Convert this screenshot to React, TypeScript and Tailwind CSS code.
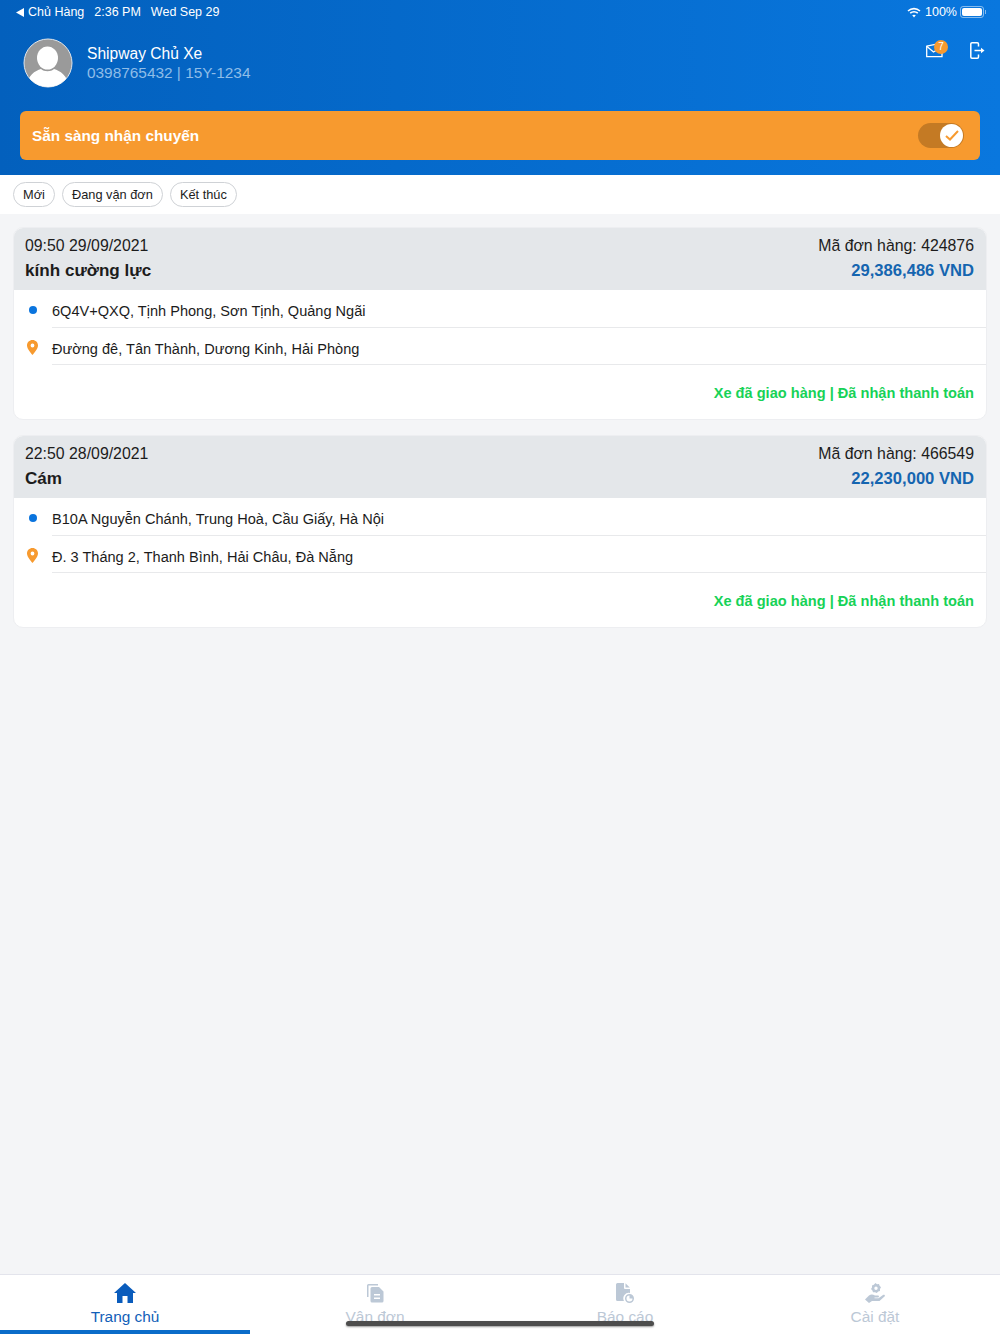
import React from "react";

function Avatar() {
  return (
    <svg width="50" height="50" viewBox="0 0 50 50" className="shrink-0">
      <defs>
        <clipPath id="av"><circle cx="25" cy="25" r="24" /></clipPath>
      </defs>
      <circle cx="25" cy="25" r="24" fill="#9a9a9a" stroke="#dfe5ec" strokeWidth="1" />
      <g clipPath="url(#av)">
        <ellipse cx="24.5" cy="20" rx="10.5" ry="11.5" fill="#fff" />
        <path d="M4 50 C4 37 12 33 18 31 C21 34 28 34 31 31 C37 33 45 37 46 50 Z" fill="#fff" />
      </g>
    </svg>
  );
}

function Wifi() {
  return (
    <svg width="14" height="11" viewBox="0 0 14 11" fill="none" stroke="#fff" strokeWidth="1.6">
      <path d="M1 4 C4.5 0.8 9.5 0.8 13 4" />
      <path d="M3.2 6.2 C5.3 4.4 8.7 4.4 10.8 6.2" />
      <path d="M7 10.5 L5.2 8.3 C6.2 7.5 7.8 7.5 8.8 8.3 Z" fill="#fff" stroke="none" />
    </svg>
  );
}

function Battery() {
  return (
    <div className="flex items-center">
      <div className="w-[24px] h-[12px] rounded-[3px] border border-white/50 p-[1px]">
        <div className="w-full h-full bg-white rounded-[2px]" />
      </div>
      <div className="w-[1px] h-[4px] bg-white/50 ml-[1px]" />
    </div>
  );
}

function Mail() {
  return (
    <div className="relative w-[22px] h-[20px]">
      <svg width="17" height="15" viewBox="0 0 17 15" fill="none" stroke="#fff" strokeWidth="1.3" className="absolute left-0 top-[3px]">
        <path d="M0.7 3.2 L13 0.7 L16 1.5 V13.7 H0.7 Z" />
        <path d="M0.7 3.2 L7.5 9 L15 4.5" />
      </svg>
      <div className="absolute left-[8px] top-0 w-[14px] h-[14px] rounded-full bg-[#f79a2f] text-white text-[10px] leading-[14px] text-center">7</div>
    </div>
  );
}

function Logout() {
  return (
    <svg width="15" height="17" viewBox="0 0 15 17" fill="none" stroke="#fff" strokeWidth="1.5">
      <path d="M8.5 4.5 V2 A1.2 1.2 0 0 0 7.3 0.8 H2 A1.2 1.2 0 0 0 0.8 2 V15 A1.2 1.2 0 0 0 2 16.2 H7.3 A1.2 1.2 0 0 0 8.5 15 V12.5" />
      <path d="M4.5 8.5 H11" />
      <path d="M11 5.8 L14.5 8.5 L11 11.2 Z" fill="#fff" stroke="none" />
    </svg>
  );
}

function Pin() {
  return (
    <svg width="11" height="15" viewBox="0 0 11 15">
      <path fillRule="evenodd" d="M5.5 0 C8.6 0 11 2.4 11 5.4 C11 9 7 12.8 5.5 15 C4 12.8 0 9 0 5.4 C0 2.4 2.4 0 5.5 0 Z M5.5 3.6 A1.9 1.9 0 1 0 5.5 7.4 A1.9 1.9 0 1 0 5.5 3.6 Z" fill="#f79a2f" />
    </svg>
  );
}

type Order = { time: string; code: string; name: string; price: string; from: string; to: string };

function Card({ o }: { o: Order }) {
  return (
    <div className="bg-white rounded-[10px] border border-[#edeef1] overflow-hidden h-[193px]">
      <div className="bg-[#e4e7ea] h-[62px] px-[11px] pt-[5px] flex justify-between text-[15.85px] leading-[25px] text-[#1c1c1c]">
        <div>
          <div>{o.time}</div>
          <div className="font-bold text-[17.1px]">{o.name}</div>
        </div>
        <div className="text-right pr-[1px]">
          <div>{o.code}</div>
          <div className="font-bold text-[16.6px] text-[#1565b0]">{o.price}</div>
        </div>
      </div>
      <div className="flex">
        <div className="w-[38px] flex justify-center pt-[16px] pr-[1px]">
          <div className="w-[8px] h-[8px] rounded-full bg-[#0a74de]" />
        </div>
        <div className="flex-1 h-[37.5px] border-b border-[#e8e9eb] pt-[8px] text-[14.55px] leading-[26px] text-[#1c1c1c]">{o.from}</div>
      </div>
      <div className="flex">
        <div className="w-[38px] flex justify-center pt-[12px] pr-[1px]">
          <Pin />
        </div>
        <div className="flex-1 h-[37.5px] border-b border-[#e8e9eb] pt-[8px] text-[14.55px] leading-[26px] text-[#1c1c1c]">{o.to}</div>
      </div>
      <div className="pt-[15px] pr-[12px] text-right text-[14.6px] leading-[26px] font-bold text-[#17d257]">
        Xe đã giao hàng | Đã nhận thanh toán
      </div>
    </div>
  );
}

function Tab({ label, active, children }: { label: string; active?: boolean; children: React.ReactNode }) {
  return (
    <div className={`flex-1 flex flex-col items-center pt-[7px] border-b-[4px] ${active ? "border-[#0a6cc9] text-[#1260b8]" : "border-transparent text-[#bcc8d6]"}`}>
      <div className="h-[22px] flex items-center justify-center">{children}</div>
      <div className="text-[15.4px] leading-[22px] mt-[2px]">{label}</div>
    </div>
  );
}

export default function App() {
  const orders: Order[] = [
    {
      time: "09:50 29/09/2021",
      code: "Mã đơn hàng: 424876",
      name: "kính cường lực",
      price: "29,386,486 VND",
      from: "6Q4V+QXQ, Tịnh Phong, Sơn Tịnh, Quảng Ngãi",
      to: "Đường đê, Tân Thành, Dương Kinh, Hải Phòng",
    },
    {
      time: "22:50 28/09/2021",
      code: "Mã đơn hàng: 466549",
      name: "Cám",
      price: "22,230,000 VND",
      from: "B10A Nguyễn Chánh, Trung Hoà, Cầu Giấy, Hà Nội",
      to: "Đ. 3 Tháng 2, Thanh Bình, Hải Châu, Đà Nẵng",
    },
  ];
  return (
    <div className="relative w-[1000px] h-[1334px] flex flex-col bg-[#f4f5f7] overflow-hidden font-['Liberation_Sans',Arial,sans-serif]">
      <div className="h-[175px] shrink-0 bg-gradient-to-r from-[#0360bd] to-[#0977de] px-[20px]">
        <div className="h-[24px] flex items-center justify-between text-white text-[12.5px] -mx-[4px]">
          <div className="flex items-center">
            <svg width="8" height="9" viewBox="0 0 8 9" fill="#fff" className="mr-[4px]"><path d="M8 0 V9 L0 4.5 Z" /></svg>
            <span>Chủ Hàng</span>
            <span className="ml-[10px]">2:36 PM</span>
            <span className="ml-[10px]">Wed Sep 29</span>
          </div>
          <div className="flex items-center -mr-[2px]">
            <Wifi />
            <span className="ml-[4px] mr-[3px]">100%</span>
            <Battery />
          </div>
        </div>
        <div className="h-[87px] flex items-start justify-between">
          <div className="flex items-center pl-[3px] pt-[14px]">
            <Avatar />
            <div className="ml-[14px]">
              <div className="text-white text-[15.6px] leading-[19px]">Shipway Chủ Xe</div>
              <div className="text-[#8fbde8] text-[15.4px] leading-[19px]">0398765432 | 15Y-1234</div>
            </div>
          </div>
          <div className="flex items-start pt-[16px] gap-[22px] -mr-[5px]">
            <Mail />
            <div className="pt-[2px]"><Logout /></div>
          </div>
        </div>
        <div className="h-[49px] bg-[#f79a2f] rounded-[6px] flex items-center justify-between pl-[12px] pr-[16px]">
          <span className="text-white font-bold text-[15.35px] pt-[1px]">Sẵn sàng nhận chuyến</span>
          <div className="w-[46px] h-[25px] rounded-full bg-[#c47a24] flex items-center justify-end pr-[1px]">
            <div className="w-[23px] h-[23px] rounded-full bg-white flex items-center justify-center">
              <svg width="14" height="11" viewBox="0 0 14 11" fill="none" stroke="#f79a2f" strokeWidth="2">
                <path d="M1 6 L5 9.5 L13 1" />
              </svg>
            </div>
          </div>
        </div>
      </div>

      <div className="h-[39px] shrink-0 bg-white flex items-center gap-[7px] px-[13px]">
        {["Mới", "Đang vận đơn", "Kết thúc"].map((t) => (
          <div key={t} className="h-[25px] px-[9px] rounded-full border border-[#cfd2d6] text-[12.8px] leading-[23px] text-[#1c1c1c]">{t}</div>
        ))}
      </div>

      <div className="flex-1 px-[13px] pt-[13px] flex flex-col gap-[15px]">
        {orders.map((o) => <Card key={o.code} o={o} />)}
      </div>

      <div className="h-[60px] shrink-0 bg-white border-t border-[#e3e4ec] flex">
        <Tab label="Trang chủ" active>
          <svg width="22" height="20" viewBox="0 0 22 20" fill="#0a5cbc">
            <path d="M11 0 L22 10 H19 V20 H13.5 V13 H8.5 V20 H3 V10 H0 Z" />
          </svg>
        </Tab>
        <Tab label="Vận đơn">
          <svg width="18" height="20" viewBox="0 0 18 20" fill="#bcc8d6">
            <path d="M1 14 V2.5 A1.5 1.5 0 0 1 2.5 1 H12 V2.5 H2.5 V14 Z" />
            <path fillRule="evenodd" d="M6 4 H13 L17.5 8.5 V18 A1.5 1.5 0 0 1 16 19.5 H6 A1.5 1.5 0 0 1 4.5 18 V5.5 A1.5 1.5 0 0 1 6 4 Z M8 11 V12.5 H14 V11 Z M8 14.5 V16 H14 V14.5 Z" />
          </svg>
        </Tab>
        <Tab label="Báo cáo">
          <svg width="19" height="20" viewBox="0 0 19 20" fill="#bcc8d6">
            <path d="M1.5 0 H8 V5 A1 1 0 0 0 9 6 H14 V10 A5.5 5.5 0 0 0 8 18 H1.5 A1.5 1.5 0 0 1 0 16.5 V1.5 A1.5 1.5 0 0 1 1.5 0 Z" />
            <path d="M9.5 0.3 L13.8 4.5 H9.5 Z" />
            <path fillRule="evenodd" d="M13.5 11 A4.5 4.5 0 1 1 13.5 20 A4.5 4.5 0 1 1 13.5 11 Z M13.5 12.5 A3 3 0 1 0 16.5 15.5 H13.5 Z" />
          </svg>
        </Tab>
        <Tab label="Cài đặt">
          <svg width="20" height="20" viewBox="0 0 20 20" fill="#bcc8d6">
            <path fillRule="evenodd" d="M10.5 0 L12 1.2 L14 1 L14.6 2.8 L16 4.2 L15 6 L15 8 L13.2 8.6 L11.8 10 L10 9.2 L8 9.2 L7.4 7.4 L6 6 L7 4.4 L7 2.4 L8.8 1.8 Z M11 3.5 A1.7 1.7 0 1 0 11 6.9 A1.7 1.7 0 1 0 11 3.5 Z" />
            <path d="M0 16.5 L4 12.5 C6 11 8 11.5 10 12.5 H13 A1 1 0 0 1 13 14.5 H9.5 V15.3 H13.5 L18 12 C19.5 11.3 20.5 12.5 19.5 13.6 L14.5 18 H7 L4 20 Z" />
          </svg>
        </Tab>
      </div>

      <div className="absolute left-[346px] top-[1321px] w-[308px] h-[5px] rounded-full bg-[#4d4d4d] shadow-[0_1px_2px_rgba(0,0,0,0.4)]" />
    </div>
  );
}
